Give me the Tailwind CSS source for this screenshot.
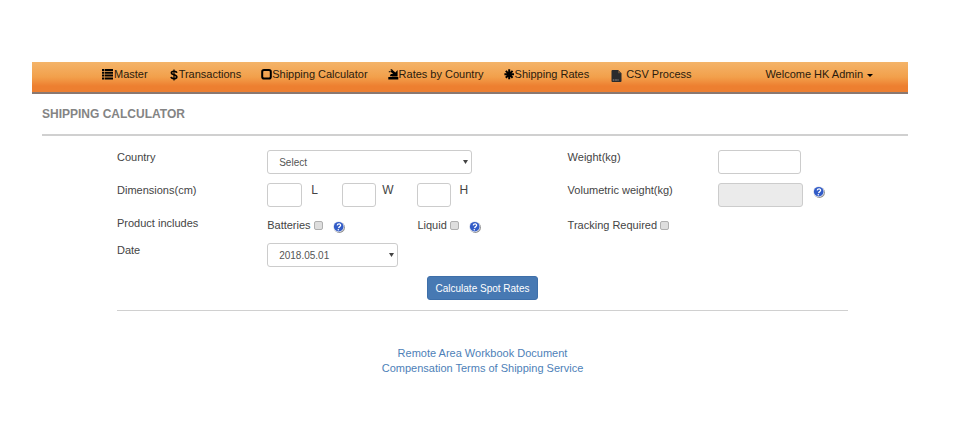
<!DOCTYPE html>
<html lang="en">

<head>
    <meta charset="UTF-8">
    <meta name="viewport" content="width=device-width, initial-scale=1.0">
    <title>Shipping Calculator</title>
    <script src="https://cdn.jsdelivr.net/npm/@tailwindcss/browser@4"></script>
</head>

<body class="bg-white font-['Liberation_Sans',Arial,sans-serif] text-[11px] leading-[15px] text-[#444]">
    <!-- Shared help icon -->
    <svg class="hidden">
        <symbol id="help" viewBox="0 0 12 12">
            <circle cx="6.4" cy="6.4" r="5.5" fill="#8f8f8f" />
            <circle cx="5.7" cy="5.7" r="5.5" fill="#dfe3ee" />
            <circle cx="5.7" cy="5.7" r="4.8" fill="#315bc7" />
            <path d="M4.2 4.4C4.6 2.4 7.9 2.5 7.6 4.5C7.4 5.7 5.9 5.6 5.6 7.1" fill="none" stroke="#fff" stroke-width="1.3" />
            <circle cx="5.3" cy="8.7" r="0.8" fill="#fff" />
        </symbol>
    </svg>

    <div class="mt-[62px] mr-[58px] ml-8">
        <nav class="flex h-8 items-start border-b-2 border-[#8a7870] bg-linear-to-b from-[#f4b469] via-[#f2a04b] via-50% to-[#ed7f30] to-80% pt-[5px] pr-[35px] pl-[70px] text-[#2b1a0c]">
            <div class="flex gap-5">
                <a href="#" class="flex items-center">
                    <svg class="mr-px size-[11px]" viewBox="0 0 11 11" fill="#000">
                        <path d="M0 0h2v2H0zM0 2.8h2v2H0zM0 5.6h2v2H0zM0 8.4h2v2H0zM2.6 0H11v2H2.6zM2.6 2.8H11v2H2.6zM2.6 5.6H11v2H2.6zM2.6 8.4H11v2H2.6z" />
                    </svg>Master</a>
                <a href="#" class="ml-0.5 flex items-center">
                    <svg class="mr-px h-3 w-2" viewBox="0 0 8 12" fill="none" stroke="#000">
                        <path d="M6.7 3.9C6.3 1.8 1.4 1.6 1.4 3.9C1.4 6.3 6.8 5.3 6.8 8C6.8 10.2 1.4 10.2 1.1 7.9" stroke-width="1.7" />
                        <path d="M4 .5v11" stroke-width="1.2" />
                    </svg>Transactions</a>
                <a href="#" class="flex items-center">
                    <svg class="size-[11px]" viewBox="0 0 11 11" fill="none" stroke="#000" stroke-width="2">
                        <rect x="1.2" y="1" width="8.6" height="8.6" rx="1.8" />
                    </svg>Shipping Calculator</a>
                <a href="#" class="flex items-center">
                    <svg class="size-[11px]" viewBox="0 0 11 11" fill="#000">
                        <path d="M.3 7.9h10v2.5H.3zM1.8 7.2l1-2.2h2.4l1.2 1 .6 1.2zM9.6 1v6.4H3.8L5.7 5.6 2.4 2.6 4.2.8 7.4 3.4z" />
                        <path d="M.8 2.3h1.6v1H.8zM2.6.2h1.6v1.4H2.6z" />
                    </svg>Rates by Country</a>
                <a href="#" class="flex items-center">
                    <svg class="size-[11px]" viewBox="0 0 11 11" fill="none" stroke="#000" stroke-width="2">
                        <path d="M5.2.3v10M.4 5.3h9.6M1.8 1.9l6.8 6.8M8.6 1.9l-6.8 6.8" />
                    </svg>Shipping Rates</a>
                <a href="#" class="ml-0.5 flex items-center">
                    <svg class="mr-1 h-3 w-[11px] translate-y-px" viewBox="0 0 11 12">
                        <path d="M1.5 0H7l3.5 3.2V11a1 1 0 0 1-1 1h-8a1 1 0 0 1-1-1V1a1 1 0 0 1 1-1z" fill="#292b2d" />
                        <path d="M7 0v3.2h3.5z" fill="#66503a" />
                        <path d="M1.8 10h1.6M4.2 10h1.6M6.4 10h1.2" stroke="#999" stroke-width="1" />
                    </svg>CSV Process</a>
            </div>
            <button type="button" class="ml-auto flex items-center">Welcome HK Admin
                <svg class="ml-1 h-[3px] w-[6px] translate-y-px" viewBox="0 0 6 3" fill="#000">
                    <path d="M0 0h6L3 3z" />
                </svg>
            </button>
        </nav>

        <h1 class="ml-[10px] border-b-2 border-[#d0d0d0] pt-[13px] pb-3 text-xs leading-[15px] font-bold text-[#848484]">SHIPPING CALCULATOR</h1>

        <form class="mt-3.5 pr-10 pl-[85px]">
            <div class="grid grid-cols-5 items-start gap-y-[9px]">
                <label for="country">Country</label>
                <div class="relative col-span-2 mr-24">
                    <select id="country" class="h-6 w-full appearance-none rounded-[3px] border border-[#ccc] bg-white px-[11px] text-[10px] text-[#555]">
                        <option>Select</option>
                    </select>
                    <svg class="pointer-events-none absolute top-2.5 right-1 h-1 w-[5px]" viewBox="0 0 5 4" fill="#444">
                        <path d="M0 0h5L2.5 4z" />
                    </svg>
                </div>
                <label for="weight">Weight(kg)</label>
                <input id="weight" type="text" class="h-6 w-[83px] rounded-[3px] border border-[#ccc] px-2">

                <label for="length">Dimensions(cm)</label>
                <div class="col-span-2 flex text-xs leading-[15px]">
                    <div class="flex w-1/4 gap-[9px]">
                        <input id="length" type="text" class="h-6 w-[35px] rounded-[3px] border border-[#ccc] px-1">
                        <label for="length">L</label>
                    </div>
                    <div class="flex w-1/4 gap-1.5">
                        <input id="width" type="text" class="h-6 w-[34px] rounded-[3px] border border-[#ccc] px-1">
                        <label for="width">W</label>
                    </div>
                    <div class="flex w-1/4 gap-2">
                        <input id="height" type="text" class="h-6 w-[34px] rounded-[3px] border border-[#ccc] px-1">
                        <label for="height">H</label>
                    </div>
                </div>
                <label for="volumetric">Volumetric weight(kg)</label>
                <div class="flex items-start gap-2.5">
                    <input id="volumetric" type="text" disabled class="h-6 w-[85px] rounded-[3px] border border-[#ccc] bg-[#ebebeb] px-2">
                    <svg class="mt-[3px] size-3"><use href="#help" /></svg>
                </div>

                <span>Product includes</span>
                <div class="flex h-[18px] items-center">
                    <label for="batteries">Batteries</label>
                    <input id="batteries" type="checkbox" class="ml-[3px] size-[9px] appearance-none rounded-[2px] border border-[#b0b0b0] bg-[#dedede] checked:bg-[#4a7ab5]">
                    <svg class="mt-[3px] ml-2.5 size-3"><use href="#help" /></svg>
                </div>
                <div class="flex h-[18px] items-center">
                    <label for="liquid">Liquid</label>
                    <input id="liquid" type="checkbox" class="ml-[3px] size-[9px] appearance-none rounded-[2px] border border-[#b0b0b0] bg-[#dedede] checked:bg-[#4a7ab5]">
                    <svg class="mt-[3px] ml-2.5 size-3"><use href="#help" /></svg>
                </div>
                <div class="col-span-2 flex h-[18px] items-center">
                    <label for="tracking">Tracking Required</label>
                    <input id="tracking" type="checkbox" class="ml-[3px] size-[9px] appearance-none rounded-[2px] border border-[#b0b0b0] bg-[#dedede] checked:bg-[#4a7ab5]">
                </div>

                <label for="date">Date</label>
                <div class="relative w-[131px]">
                    <select id="date" class="h-6 w-full appearance-none rounded-[3px] border border-[#ccc] bg-white px-[11px] text-[10px] text-[#555]">
                        <option>2018.05.01</option>
                    </select>
                    <svg class="pointer-events-none absolute top-2.5 right-1 h-1 w-[5px]" viewBox="0 0 5 4" fill="#444">
                        <path d="M0 0h5L2.5 4z" />
                    </svg>
                </div>
            </div>

            <div class="mr-5 border-b border-[#d0d0d0] pt-[9px] pb-2.5 text-center">
                <button type="button" class="h-6 rounded-[3px] border border-[#3e6fa9] bg-[#4779b3] px-2 text-[10px] text-white">Calculate Spot Rates</button>
            </div>
        </form>

        <div class="mt-[35px] flex flex-col items-center pr-[60px] pl-[85px] text-[#4e7fb8]">
            <a href="#">Remote Area Workbook Document</a>
            <a href="#">Compensation Terms of Shipping Service</a>
        </div>
    </div>
</body>

</html>
